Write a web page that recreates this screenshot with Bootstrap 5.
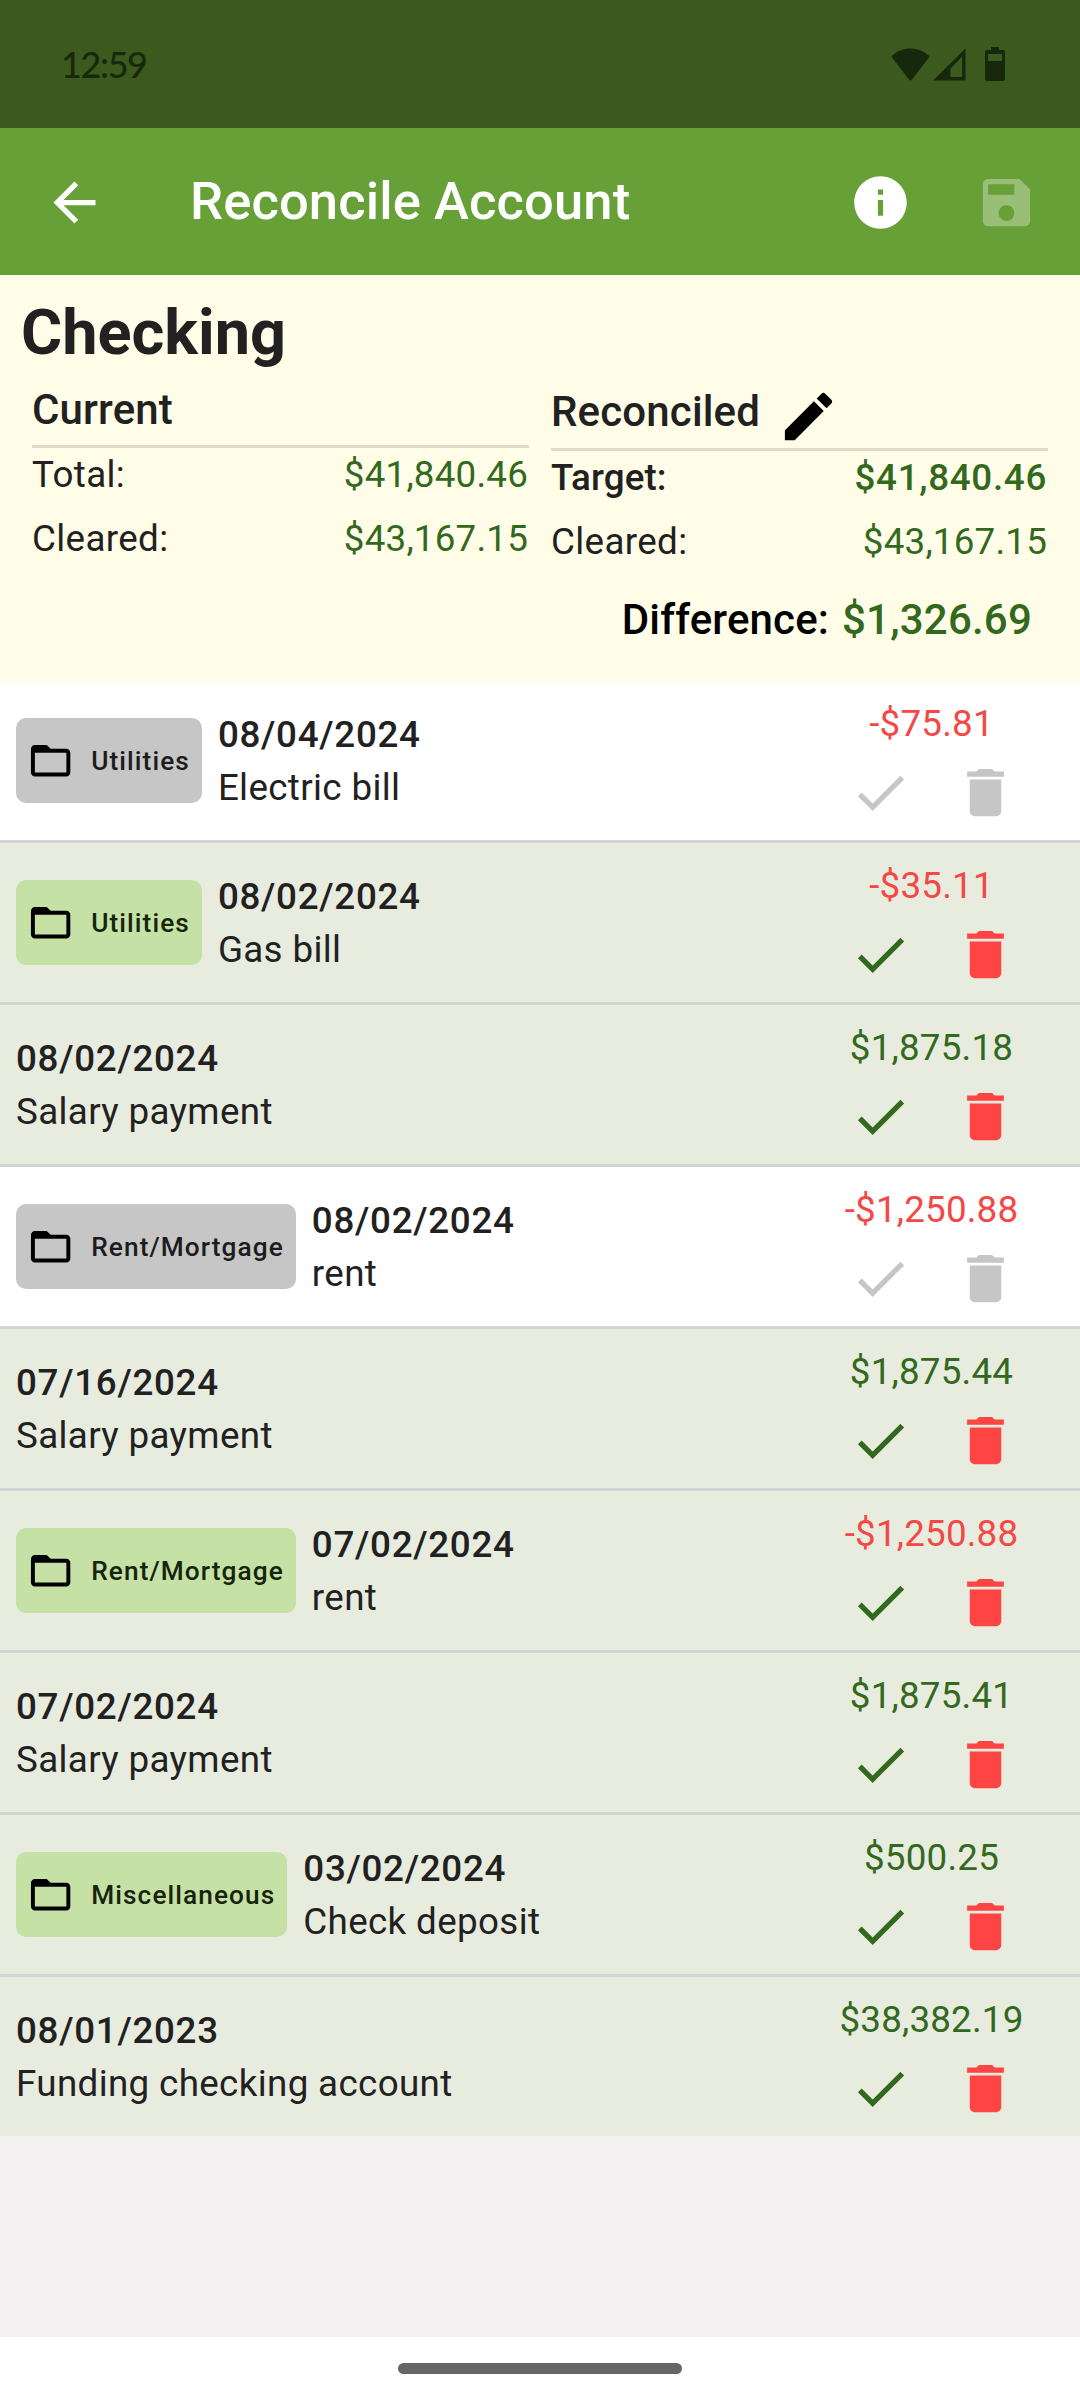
<!DOCTYPE html>
<html lang="en">
<head>
<meta charset="utf-8">
<meta name="viewport" content="width=device-width, initial-scale=1">
<title>Reconcile Account</title>
<link rel="stylesheet" href="https://cdn.jsdelivr.net/npm/bootstrap@5.3.0/dist/css/bootstrap.min.css">
<style>
body{font-family:Roboto,"Liberation Sans",sans-serif;font-size:36.75px;line-height:43px;letter-spacing:.36px;color:#212121;background:#f2f0f1;min-height:2400px}
svg{display:block;flex:none;fill:currentColor}
.ico{width:63px;height:63px}
.status-strip{height:128px;background:#3c5a1e;color:#17280d;padding:0 75px 0 61px}
.clock{font:500 36px/44px Lato,sans-serif;letter-spacing:-1.4px}
.signal{margin-left:3px}
.battery{margin-left:19px}
.topbar{height:147px;background:#67a037;color:#fff;padding:1px 42px 0 43px}
.topbar h1{font-size:52.5px;font-weight:500;line-height:62px;letter-spacing:.12px;margin:0 0 2px 84px}
.faded{opacity:.32}
.actions{gap:63px}
.summary{height:406px;background:#fffde7;padding-top:21px}
.summary h2{font-size:63px;font-weight:700;line-height:74px;letter-spacing:0;margin:0 0 0 21px}
.cols{padding:15px 32px 0;gap:22px}
.cols h3{font-size:42px;font-weight:500;line-height:49px;letter-spacing:.15px;margin:0;color:#212121}
.colhead{border-bottom:3px solid #dfddca;height:63px;margin-bottom:5px}
.colhead.tall{height:66px;padding-top:2px}
.colhead .ico{margin:-2px 0 0 17px;color:#000}
.pair{height:64px}
.pair .green{padding-right:1px}
.green{color:#33691e;letter-spacing:.2px}
.red{color:#f44846;letter-spacing:.2px}
.fw-md,.fw-md .green{font-weight:500;letter-spacing:.7px}
.tight{letter-spacing:.1px}
.diff{font-size:42px;font-weight:500;line-height:49px;letter-spacing:.15px;color:#000;padding-right:48px;margin-top:11px;gap:13px}
.entry{height:162px;border-bottom:3px solid #d4d4d4;padding:0 0 0 16px;background:#fff;color:#212121}
.entry.on{background:#e8ecdf}
.entry:last-child{height:159px;border-bottom:0}
.chip{height:85px;border-radius:10px;background:#c6c6c6;margin:37px 16px 0 0;padding:0 12px 0 11px;font-size:26.25px;font-weight:500;line-height:31px;letter-spacing:1.07px;color:#1c1c1c}
.chip span{padding-top:2px}
.chip svg{width:47.25px;height:47.25px;margin-right:17px;color:#000}
.on .chip{background:#c5e1a5;color:#16240b}
.about{padding-top:27px;line-height:53px}
.tail{width:298px;padding-top:21px}
.tail .red,.tail .green{padding-left:1px}
.tools{gap:42px;padding:16px 0 0 4px;color:#c6c6c6}
.on .tick{color:#33691e}
.on .bin{color:#f44}
.navzone{height:63px;background:#fff;margin-top:auto}
.handle{width:284px;height:11px;border-radius:6px;background:#666;margin-top:26px}
</style>
<script src="https://cdn.jsdelivr.net/npm/bootstrap@5.3.0/dist/js/bootstrap.bundle.min.js"></script>
</head>
<body class="d-flex flex-column m-0">
<svg class="d-none" xmlns="http://www.w3.org/2000/svg">
<symbol id="folder" viewBox="0 0 24 24"><path d="M20 6h-8l-2-2H4c-1.1 0-1.990.9-1.990 2L2 18c0 1.100.9 2 2 2h16c1.100 0 2-.9 2-2V8c0-1.100-.9-2-2-2zm0 12H4V8h16v10z"/></symbol>
<symbol id="check" viewBox="0 0 24 24"><path d="M9 16.170 4.830 12l-1.420 1.410L9 19 21 7l-1.410-1.410z"/></symbol>
<symbol id="trash" viewBox="0 0 24 24"><path d="M6 19c0 1.100.9 2 2 2h8c1.100 0 2-.9 2-2V7H6v12zM19 4h-3.500l-1-1h-5l-1 1H5v2h14V4z"/></symbol>
</svg>

<div class="status-strip d-flex align-items-center justify-content-between">
<span class="clock">12:59</span>
<div class="d-flex align-items-center">
<svg width="39" height="33" viewBox="0 0 39 33"><path d="M19.500 32.500 Q18.800 32.500 18 31.500 L1 9.500 Q.3 8.500 1.300 7.600 C11-1.800 28-1.800 37.700 7.600 Q38.700 8.500 38 9.500 L21 31.500 Q20.200 32.500 19.500 32.500z"/></svg>
<svg class="signal" width="33" height="33" viewBox="0 0 34 33"><path fill-rule="evenodd" d="M0 33 33.500 0V33zM18 29.500H30V8.500L18 20.500z"/></svg>
<svg class="battery" width="20" height="34" viewBox="0 0 20 34"><path fill-rule="evenodd" d="M6 0h8v3h4a2 2 0 0 1 2 2v27a2 2 0 0 1-2 2H2a2 2 0 0 1-2-2V5a2 2 0 0 1 2-2h4zM3 7v7h14V7z"/></svg>
</div>
</div>

<nav class="topbar d-flex align-items-center">
<svg class="ico" viewBox="0 0 24 24"><path d="M20 11H7.830l5.590-5.590L12 4l-8 8 8 8 1.410-1.410L7.830 13H20v-2z"/></svg>
<h1>Reconcile Account</h1>
<div class="actions d-flex ms-auto">
<svg class="ico" viewBox="0 0 24 24"><path d="M12 2C6.480 2 2 6.480 2 12s4.480 10 10 10 10-4.480 10-10S17.520 2 12 2zm1 15h-2v-6h2v6zm0-8h-2V7h2v2z"/></svg>
<svg class="ico faded" viewBox="0 0 24 24"><path d="M17 3H5c-1.110 0-2 .9-2 2v14c0 1.100.89 2 2 2h14c1.100 0 2-.9 2-2V7l-4-4zm-5 16c-1.660 0-3-1.340-3-3s1.340-3 3-3 3 1.340 3 3-1.340 3-3 3zm3-10H5V5h10v4z"/></svg>
</div>
</nav>

<section class="summary">
<h2>Checking</h2>
<div class="cols d-flex">
<div class="flex-fill w-50">
<div class="colhead"><h3>Current</h3></div>
<div class="pair d-flex justify-content-between"><span>Total:</span><span class="green">$41,840.46</span></div>
<div class="pair d-flex justify-content-between"><span>Cleared:</span><span class="green">$43,167.15</span></div>
</div>
<div class="flex-fill w-50">
<div class="colhead tall d-flex"><h3>Reconciled</h3><svg class="ico" viewBox="0 0 24 24"><path d="M3 17.250V21h3.750L17.810 9.940l-3.750-3.750L3 17.250zM20.710 7.040c.39-.39.39-1.020 0-1.410l-2.340-2.340c-.39-.39-1.020-.39-1.410 0l-1.830 1.830 3.750 3.750 1.830-1.830z"/></svg></div>
<div class="pair d-flex justify-content-between fw-md"><span class="tight">Target:</span><span class="green">$41,840.46</span></div>
<div class="pair d-flex justify-content-between"><span>Cleared:</span><span class="green">$43,167.15</span></div>
</div>
</div>
<div class="diff d-flex justify-content-end"><span>Difference:</span><span class="green">$1,326.69</span></div>
</section>

<main>
<div class="entry d-flex align-items-start">
<div class="chip d-flex align-items-center"><svg><use href="#folder"/></svg><span>Utilities</span></div>
<div class="about"><div class="fw-md">08/04/2024</div><div>Electric bill</div></div>
<div class="tail ms-auto text-center"><div class="red">-$75.81</div><div class="tools d-flex justify-content-center"><svg class="ico tick"><use href="#check"/></svg><svg class="ico bin"><use href="#trash"/></svg></div></div>
</div>
<div class="entry on d-flex align-items-start">
<div class="chip d-flex align-items-center"><svg><use href="#folder"/></svg><span>Utilities</span></div>
<div class="about"><div class="fw-md">08/02/2024</div><div>Gas bill</div></div>
<div class="tail ms-auto text-center"><div class="red">-$35.11</div><div class="tools d-flex justify-content-center"><svg class="ico tick"><use href="#check"/></svg><svg class="ico bin"><use href="#trash"/></svg></div></div>
</div>
<div class="entry on d-flex align-items-start">
<div class="about"><div class="fw-md">08/02/2024</div><div>Salary payment</div></div>
<div class="tail ms-auto text-center"><div class="green">$1,875.18</div><div class="tools d-flex justify-content-center"><svg class="ico tick"><use href="#check"/></svg><svg class="ico bin"><use href="#trash"/></svg></div></div>
</div>
<div class="entry d-flex align-items-start">
<div class="chip d-flex align-items-center"><svg><use href="#folder"/></svg><span>Rent/Mortgage</span></div>
<div class="about"><div class="fw-md">08/02/2024</div><div>rent</div></div>
<div class="tail ms-auto text-center"><div class="red">-$1,250.88</div><div class="tools d-flex justify-content-center"><svg class="ico tick"><use href="#check"/></svg><svg class="ico bin"><use href="#trash"/></svg></div></div>
</div>
<div class="entry on d-flex align-items-start">
<div class="about"><div class="fw-md">07/16/2024</div><div>Salary payment</div></div>
<div class="tail ms-auto text-center"><div class="green">$1,875.44</div><div class="tools d-flex justify-content-center"><svg class="ico tick"><use href="#check"/></svg><svg class="ico bin"><use href="#trash"/></svg></div></div>
</div>
<div class="entry on d-flex align-items-start">
<div class="chip d-flex align-items-center"><svg><use href="#folder"/></svg><span>Rent/Mortgage</span></div>
<div class="about"><div class="fw-md">07/02/2024</div><div>rent</div></div>
<div class="tail ms-auto text-center"><div class="red">-$1,250.88</div><div class="tools d-flex justify-content-center"><svg class="ico tick"><use href="#check"/></svg><svg class="ico bin"><use href="#trash"/></svg></div></div>
</div>
<div class="entry on d-flex align-items-start">
<div class="about"><div class="fw-md">07/02/2024</div><div>Salary payment</div></div>
<div class="tail ms-auto text-center"><div class="green">$1,875.41</div><div class="tools d-flex justify-content-center"><svg class="ico tick"><use href="#check"/></svg><svg class="ico bin"><use href="#trash"/></svg></div></div>
</div>
<div class="entry on d-flex align-items-start">
<div class="chip d-flex align-items-center"><svg><use href="#folder"/></svg><span>Miscellaneous</span></div>
<div class="about"><div class="fw-md">03/02/2024</div><div>Check deposit</div></div>
<div class="tail ms-auto text-center"><div class="green">$500.25</div><div class="tools d-flex justify-content-center"><svg class="ico tick"><use href="#check"/></svg><svg class="ico bin"><use href="#trash"/></svg></div></div>
</div>
<div class="entry on d-flex align-items-start">
<div class="about"><div class="fw-md">08/01/2023</div><div>Funding checking account</div></div>
<div class="tail ms-auto text-center"><div class="green">$38,382.19</div><div class="tools d-flex justify-content-center"><svg class="ico tick"><use href="#check"/></svg><svg class="ico bin"><use href="#trash"/></svg></div></div>
</div>
</main>

<footer class="navzone d-flex justify-content-center"><div class="handle"></div></footer>
</body>
</html>
